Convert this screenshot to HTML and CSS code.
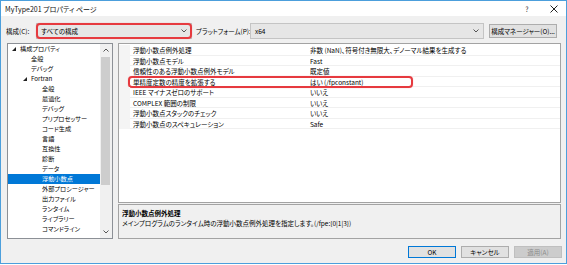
FILE: index.html
```html
<!DOCTYPE html>
<html lang="ja">
<head>
<meta charset="utf-8">
<title>MyType201 プロパティ ページ</title>
<link rel="stylesheet" href="styles.css">
</head>
<body>
<div class="window">
  <div class="titlebar">
    <span class="title">MyType201 プロパティ ページ</span>
    <span class="tb-help">?</span>
    <span class="tb-close"><svg width="8" height="8" viewBox="0 0 8 8"><path d="M0.5 0.5L7.5 7.5M7.5 0.5L0.5 7.5" stroke="#222" stroke-width="1" fill="none"/></svg></span>
  </div>

  <div class="toolbar">
    <span class="lbl lbl-config">構成(C):</span>
    <div class="combo combo-config annot">
      <span class="combo-text">すべての構成</span>
      <svg class="chev" width="6" height="4" viewBox="0 0 6 4"><path d="M0.5 0.5L3 3L5.5 0.5" stroke="#555" stroke-width="1" fill="none"/></svg>
    </div>
    <span class="lbl lbl-platform">プラットフォーム(P):</span>
    <div class="combo combo-platform">
      <span class="combo-text">x64</span>
      <svg class="chev" width="6" height="4" viewBox="0 0 6 4"><path d="M0.5 0.5L3 3L5.5 0.5" stroke="#555" stroke-width="1" fill="none"/></svg>
    </div>
    <button class="btn btn-manager">構成マネージャー(O)...</button>
  </div>

  <div class="main">
    <div class="tree">
      <ul class="tree-list">
        <li class="trow lv0"><span class="tog"><svg width="4" height="4" viewBox="0 0 4 4"><polygon points="4,0 4,4 0,4" fill="#222"/></svg></span>構成プロパティ</li>
        <li class="trow lv1"><span class="tog"></span>全般</li>
        <li class="trow lv1"><span class="tog"></span>デバッグ</li>
        <li class="trow lv1"><span class="tog"><svg width="4" height="4" viewBox="0 0 4 4"><polygon points="4,0 4,4 0,4" fill="#222"/></svg></span>Fortran</li>
        <li class="trow lv2"><span class="tog"></span>全般</li>
        <li class="trow lv2"><span class="tog"></span>最適化</li>
        <li class="trow lv2"><span class="tog"></span>デバッグ</li>
        <li class="trow lv2"><span class="tog"></span>プリプロセッサー</li>
        <li class="trow lv2"><span class="tog"></span>コード生成</li>
        <li class="trow lv2"><span class="tog"></span>言語</li>
        <li class="trow lv2"><span class="tog"></span>互換性</li>
        <li class="trow lv2"><span class="tog"></span>診断</li>
        <li class="trow lv2"><span class="tog"></span>データ</li>
        <li class="trow lv2 selected"><span class="tog"></span>浮動小数点</li>
        <li class="trow lv2"><span class="tog"></span>外部プロシージャー</li>
        <li class="trow lv2"><span class="tog"></span>出力ファイル</li>
        <li class="trow lv2"><span class="tog"></span>ランタイム</li>
        <li class="trow lv2"><span class="tog"></span>ライブラリー</li>
        <li class="trow lv2"><span class="tog"></span>コマンドライン</li>
      </ul>
      <div class="scrollbar">
        <span class="sb-arrow"><svg width="6" height="4" viewBox="0 0 6 4"><path d="M0.5 3.5L3 1L5.5 3.5" stroke="#555" stroke-width="1" fill="none"/></svg></span>
        <div class="sb-track"><div class="sb-thumb"></div></div>
        <span class="sb-arrow"><svg width="6" height="4" viewBox="0 0 6 4"><path d="M0.5 0.5L3 3L5.5 0.5" stroke="#555" stroke-width="1" fill="none"/></svg></span>
      </div>
    </div>

    <div class="right">
      <div class="grid">
        <div class="prow"><span class="strip"></span><span class="pname">浮動小数点例外処理</span><span class="pval">非数 (NaN)、符号付き無限大、デノーマル結果を生成する</span></div>
        <div class="prow"><span class="strip"></span><span class="pname">浮動小数点モデル</span><span class="pval">Fast</span></div>
        <div class="prow"><span class="strip"></span><span class="pname">信頼性のある浮動小数点例外モデル</span><span class="pval">既定値</span></div>
        <div class="prow annot-row"><span class="strip"></span><span class="pname">単精度定数の精度を拡張する</span><span class="pval">はい (/fpconstant)</span></div>
        <div class="prow"><span class="strip"></span><span class="pname">IEEE マイナスゼロのサポート</span><span class="pval">いいえ</span></div>
        <div class="prow"><span class="strip"></span><span class="pname">COMPLEX 範囲の制限</span><span class="pval">いいえ</span></div>
        <div class="prow"><span class="strip"></span><span class="pname">浮動小数点スタックのチェック</span><span class="pval">いいえ</span></div>
        <div class="prow"><span class="strip"></span><span class="pname">浮動小数点のスペキュレーション</span><span class="pval">Safe</span></div>
      </div>
      <div class="desc">
        <div class="desc-title">浮動小数点例外処理</div>
        <div class="desc-text">メインプログラムのランタイム時の浮動小数点例外処理を指定します。(/fpe:{0|1|3})</div>
      </div>
    </div>
  </div>

  <div class="footer">
    <button class="btn btn-ok">OK</button>
    <button class="btn">キャンセル</button>
    <button class="btn btn-disabled">適用(A)</button>
  </div>
</div>
</body>
</html>
```

FILE: styles.css
```css
html, body {
  margin: 0;
  padding: 0;
}
body {
  width: 567px;
  height: 265px;
  overflow: hidden;
  background: #ffffff;
  font-family: "Noto Sans CJK JP", "Noto Sans", sans-serif;
  font-feature-settings: "palt";
  font-size: 6.5px;
  color: #000;
}
.window {
  box-sizing: border-box;
  width: 567px;
  height: 264px;
  border: 1px solid #4c9fdc;
  background: #f0f0f0;
  display: flex;
  flex-direction: column;
}

/* title bar */
.titlebar {
  flex: none;
  height: 15px;
  background: #ffffff;
  display: flex;
  align-items: center;
  padding-left: 4px;
}
.title {
  flex: 1;
  font-size: 7px;
  color: #111;
}
.tb-help {
  width: 20px;
  text-align: center;
  font-size: 7px;
  color: #333;
}
.tb-close {
  width: 20px;
  margin-left: 7px;
  margin-right: 2px;
  display: flex;
  justify-content: center;
  align-items: center;
}

/* toolbar */
.toolbar {
  flex: none;
  display: flex;
  align-items: center;
  padding: 7px 0 0 5px;
  height: 16px;
}
.lbl {
  flex: none;
  white-space: nowrap;
}
.lbl-config { width: 30px; }
.lbl-platform { width: 54px; }
.combo {
  flex: none;
  box-sizing: border-box;
  height: 16px;
  background: #e6e6e6;
  border: 1px solid #c4c4c4;
  display: flex;
  align-items: center;
  padding: 0 4px 0 4px;
  position: relative;
}
.combo-text { flex: 1; }
.combo-config { width: 156px; margin-right: 4px; }
.combo-platform { width: 234px; margin-right: 5px; }
.chev { flex: none; }
.annot::after {
  content: "";
  position: absolute;
  inset: -1px;
  border: 2px solid #e63a3f;
  border-radius: 4px;
  box-shadow: 0 0 1px rgba(230, 58, 63, 0.5);
}

.btn {
  font-family: inherit;
  font-feature-settings: "palt";
  font-size: 6.5px;
  box-sizing: border-box;
  height: 12px;
  width: 48px;
  padding: 0;
  background: #e1e1e1;
  border: 1px solid #adadad;
  color: #000;
  line-height: 10px;
  text-align: center;
}
.btn-manager {
  width: 68px;
  height: 14px;
  white-space: nowrap;
}
.btn-ok { border-color: #0078d7; }
.btn-disabled {
  background: #cccccc;
  border-color: #bfbfbf;
  color: #8a8a8a;
}

/* main */
.main {
  flex: none;
  display: flex;
  margin-top: 4px;
  padding: 0 5px 0 6px;
  height: 196px;
}

.tree {
  flex: none;
  box-sizing: border-box;
  width: 106px;
  height: 196px;
  border: 1px solid #8c9096;
  background: #fff;
  display: flex;
}
.tree-list {
  flex: 1;
  list-style: none;
  margin: 0;
  padding: 0;
}
.trow {
  height: 10px;
  line-height: 10px;
  display: flex;
  align-items: center;
  white-space: nowrap;
  font-size: 6.2px;
}
.tog {
  flex: none;
  width: 8px;
  display: flex;
  align-items: center;
}
.lv0 { padding-left: 4px; }
.lv1 { padding-left: 15px; }
.lv2 { padding-left: 26px; }
.selected {
  background: #0078d7;
  color: #fff;
}
.scrollbar {
  flex: none;
  width: 12px;
  background: #f0f0f0;
  display: flex;
  flex-direction: column;
}
.sb-arrow {
  flex: none;
  height: 12px;
  display: flex;
  align-items: center;
  justify-content: center;
}
.sb-track {
  flex: 1;
  padding: 1px 2px 0 1px;
}
.sb-thumb {
  height: 128px;
  background: #cdcdcd;
}

/* right side */
.right {
  flex: 1;
  margin-left: 5px;
  display: flex;
  flex-direction: column;
}
.grid {
  flex: none;
  box-sizing: border-box;
  height: 160px;
  border: 1px solid #a3a3a3;
  background: #fff;
  padding-top: 1px;
}
.prow {
  position: relative;
  display: grid;
  grid-template-columns: 11px 178px 1fr;
  height: 10.5px;
  line-height: 10px;
  white-space: nowrap;
}
.strip {
  background: #f4f4f4;
}
.pname {
  padding-left: 3px;
  border-bottom: 1px solid #f0f0f0;
  overflow: hidden;
}
.pval {
  padding-left: 2px;
  border-bottom: 1px solid #f0f0f0;
  overflow: hidden;
}
.annot-row::after {
  content: "";
  position: absolute;
  left: 9px;
  top: -0.5px;
  width: 285px;
  height: 11.5px;
  box-sizing: border-box;
  border: 2px solid #e63a3f;
  border-radius: 4px;
  box-shadow: 0 0 1px rgba(230, 58, 63, 0.5);
}

.desc {
  flex: none;
  box-sizing: border-box;
  height: 35px;
  margin-top: 1px;
  border: 1px solid #a3a3a3;
  background: #f0f0f0;
  padding: 3px 3px;
  line-height: 10px;
}
.desc-title {
  font-weight: bold;
}

/* footer */
.footer {
  flex: none;
  display: flex;
  justify-content: flex-end;
  gap: 5px;
  padding: 7px 4px 0 0;
}
```
